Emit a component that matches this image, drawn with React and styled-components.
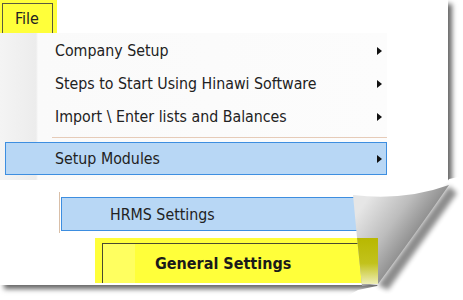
import React from 'react';
import styled, { createGlobalStyle } from 'styled-components';

const Global = createGlobalStyle`
  html, body { margin: 0; padding: 0; background: #fff; }
  body { font-family: "DejaVu Sans Condensed", "DejaVu Sans", sans-serif; }
`;

const Stage = styled.div`
  position: relative;
  width: 463px;
  height: 300px;
  overflow: hidden;
  background: #fff;
`;

const Paper = styled.div`
  width: 448px;
  height: 285px;
  background: #fff;
  box-shadow: 4px 4px 5px rgba(0, 0, 0, 0.6);
  display: flex;
  flex-direction: column;
  color: #222;
  font-size: 15.8px;
  font-stretch: condensed;
`;

const MenuBar = styled.div`
  height: 33px;
  display: flex;
`;

const FileTab = styled.div`
  width: 57px;
  height: 33px;
  box-sizing: border-box;
  padding: 3px 0 0 2px;
  background: #ffff3a;
  display: flex;
`;

const FileTabInner = styled.div`
  width: 51px;
  box-sizing: border-box;
  border: 1px solid #5a5a40;
  border-bottom: none;
  padding: 5px 0 0 12px;
  font-size: 16px;
`;

const Menu = styled.div`
  width: 387px;
  padding: 1px 0 5px;
  background: linear-gradient(to right, #f4f4f4 0, #ececec 36px, #fafafa 38px, #fcfcfc 100%);
  display: flex;
  flex-direction: column;
`;

const Item = styled.div`
  height: 33px;
  box-sizing: border-box;
  display: flex;
  align-items: center;
  justify-content: space-between;
  padding: 0 5px 0 55px;
  margin-left: ${p => (p.$active ? '5px' : '0')};
  ${p => p.$active && `
    padding-left: 49px;
    padding-right: 4px;
    border: 1px solid #3d8ee0;
    background: #b8d7f5;
  `}
`;

const Arrow = styled.span`
  width: 0;
  height: 0;
  border-left: 5px solid #111;
  border-top: 4.5px solid transparent;
  border-bottom: 4.5px solid transparent;
`;

const Separator = styled.div`
  height: 1px;
  margin: 4px 0 4px 52px;
  background: #e6cbb8;
`;

const SubPanel = styled.div`
  margin: 12px 0 0 59px;
  padding-top: 5px;
  height: 41px;
  box-sizing: border-box;
  border-left: 1px solid #d9bfa8;
`;

const SubItem = styled.div`
  width: 297px;
  height: 34px;
  margin-left: 1px;
  box-sizing: border-box;
  border: 1px solid #3d8ee0;
  background: #b8d7f5;
  display: flex;
  align-items: center;
  padding-left: 48px;
`;

const GeneralBar = styled.div`
  margin: 5px 0 0 95px;
  width: 283px;
  height: 45px;
  box-sizing: border-box;
  padding: 5px 0 0 7px;
  background: #ffff3a;
  display: flex;
`;

const GeneralInner = styled.div`
  flex: 1;
  border-left: 1px solid #4a4a30;
  border-top: 1px solid #4a4a30;
  background: linear-gradient(to right, #ffff60 0, #ffff60 32px, transparent 32px);
  display: flex;
  align-items: center;
  padding-left: 52px;
  font-weight: bold;
  font-size: 16px;
  color: #1a1a1a;
`;

const CurlLayer = styled.svg`
  position: absolute;
  left: 0;
  top: 0;
  width: 463px;
  height: 300px;
  pointer-events: none;
`;

const items = [
  'Company Setup',
  'Steps to Start Using Hinawi Software',
  'Import \\ Enter lists and Balances',
];

function PageCurl() {
  const curl = 'M353,195 Q405,201 449,185 Q418,230 378,284 L362,286 Q357,240 353,195 Z';
  return (
    <CurlLayer viewBox="0 0 463 300">
      <defs>
        <linearGradient id="curlG" gradientUnits="userSpaceOnUse" x1="358" y1="212" x2="414" y2="252">
          <stop offset="0" stopColor="#e6e6e6" />
          <stop offset="0.5" stopColor="#bdbdbd" />
          <stop offset="0.88" stopColor="#8e8e8e" />
          <stop offset="1" stopColor="#6c6c6c" />
        </linearGradient>
        <linearGradient id="oliveG" x1="0" y1="0" x2="0" y2="1">
          <stop offset="0" stopColor="#b8b800" />
          <stop offset="0.55" stopColor="#c2c21c" />
          <stop offset="1" stopColor="#eeeeb8" />
        </linearGradient>
        <clipPath id="curlClip">
          <path d={curl} />
        </clipPath>
        <filter id="soft" x="-50%" y="-50%" width="200%" height="200%">
          <feGaussianBlur stdDeviation="2.5" />
        </filter>
      </defs>
      <polygon points="449,179 463,176 463,300 340,300 358,290 377,286" fill="#fff" />
      <path d="M449,186 L378,285 L388,290 L457,193 Z" fill="#000" opacity="0.45" filter="url(#soft)" />
      <path d={curl} fill="url(#curlG)" />
      <rect x="350" y="238" width="28" height="46" fill="url(#oliveG)" clipPath="url(#curlClip)" />
    </CurlLayer>
  );
}

export default function App() {
  return (
    <>
      <Global />
      <Stage>
        <Paper>
          <MenuBar>
            <FileTab>
              <FileTabInner>File</FileTabInner>
            </FileTab>
          </MenuBar>
          <Menu>
            {items.map(t => (
              <Item key={t}>
                <span>{t}</span>
                <Arrow />
              </Item>
            ))}
            <Separator />
            <Item $active>
              <span>Setup Modules</span>
              <Arrow />
            </Item>
          </Menu>
          <SubPanel>
            <SubItem>HRMS Settings</SubItem>
          </SubPanel>
          <GeneralBar>
            <GeneralInner>General Settings</GeneralInner>
          </GeneralBar>
        </Paper>
        <PageCurl />
      </Stage>
    </>
  );
}
